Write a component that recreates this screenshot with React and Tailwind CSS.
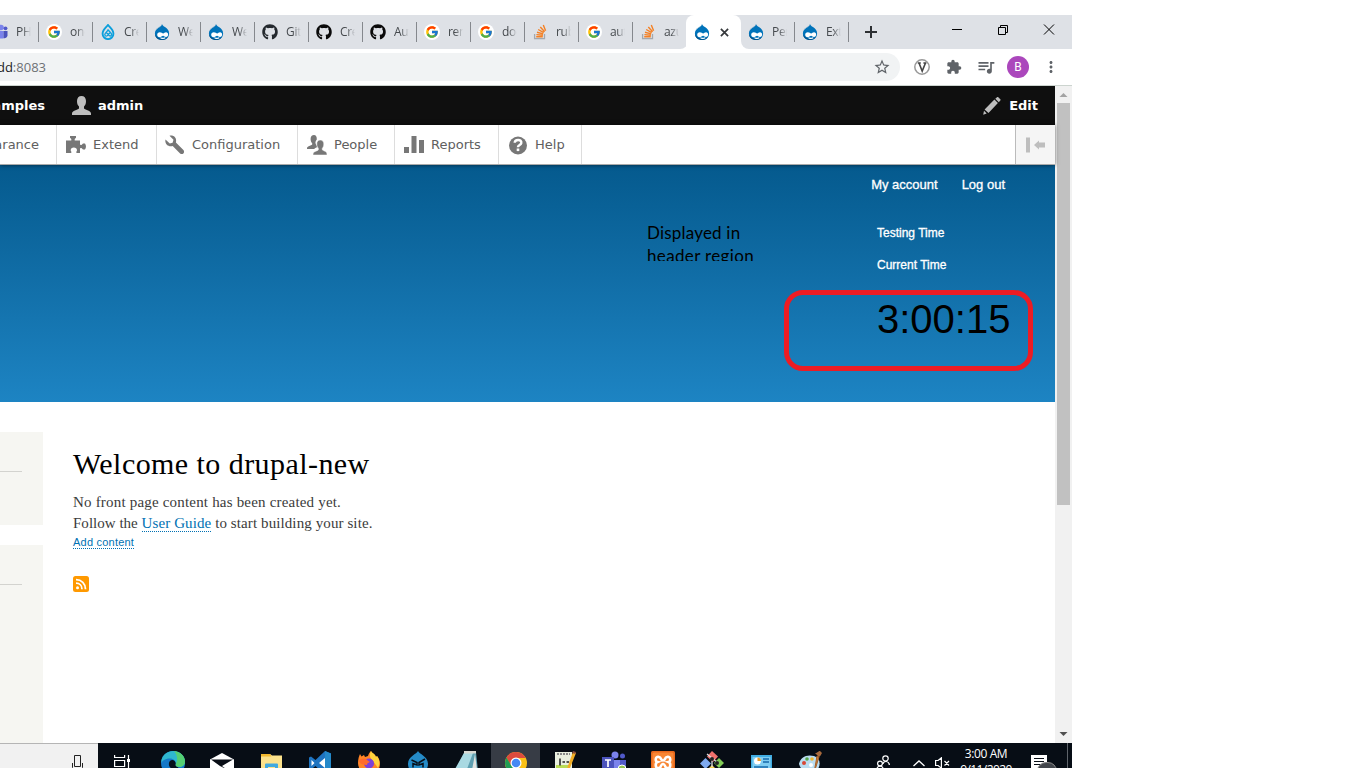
import React from "react";
import { FcGoogle } from "react-icons/fc";
import { FaGithub } from "react-icons/fa";
import { MdStarBorder, MdExtension, MdQueueMusic, MdMoreVert } from "react-icons/md";

function Druplicon() {
  return (
    <svg viewBox="0 0 16 16" className="h-4 w-4">
      <path d="M8 0c.5 1.600 1.600 2.200 3 3.100 2.400 1.500 4.100 3.500 4.100 6.300 0 3.800-3.200 6.600-7.100 6.600S.9 13.200.9 9.400c0-2.800 1.700-4.600 3.800-6C6.400 2.300 7.600 1.800 8 0z" fill="#0073ba" />
      <path d="M1.600 6.200C2.300 4.600 3.500 4 5 3.100 6.600 2.100 7.600 1.600 8 0c-.2 3-4 3.400-6.400 6.200z" fill="#9ab9cc" />
      <path d="M1 10.500c.4 3.300 3.400 5.500 7 5.500 2.800 0 5.100-1.300 6.300-3.300-1.600 1.300-3.400 2-6.100 2-3 0-5.400-1.400-7.200-4.200z" fill="#00538c" />
      <path d="M5.800 8.200c1.600 0 2.500 1.100 3.400 1.400.9-.3 1.500-1.300 2.800-1.300 1.400 0 2.100 1 2.100 2.200 0 1.400-.8 2.500-2.100 2.500-1.200 0-1.900-1.100-2.900-1.200-1.100.2-2 1.400-3.500 1.400s-2.400-1-2.400-2.500 1-2.500 2.600-2.500z" fill="#fff" />
      <path d="M6.500 13.700c1 1 3.600 1 4.700-.1" stroke="#fff" strokeWidth="1.200" fill="none" />
    </svg>
  );
}

function DrupalDrop() {
  return (
    <svg viewBox="0 0 16 16" className="h-4 w-4" fill="none" stroke="#0c9fdc">
      <path d="M8 1C6.500 3.200 2.600 5.500 2.600 9.700a5.400 5.400 0 0 0 10.800 0C13.400 5.500 9.500 3.200 8 1z" strokeWidth="1.900" />
      <path d="M8 5.200v1L5.300 9.300c-1.300 1.700.3 3.500 1.900 2.500L10.400 8.300M6.400 8.500l3 3.200c1.500 1 3-.9 1.700-2.500L8 5.800" strokeWidth="1.300" />
    </svg>
  );
}

function Google() {
  return (
    <span className="flex h-4 w-4 items-center justify-center rounded-full bg-white">
      <FcGoogle className="h-[14px] w-[14px]" />
    </span>
  );
}

function StackOverflow() {
  return (
    <svg viewBox="0 0 16 16" className="h-4 w-4" fill="none">
      <path d="M2.600 10v4.700h9.900V10" stroke="#a4a8ad" strokeWidth="1.300" />
      <path d="M4.200 12.800h6.600M4.400 10.600l6.500.7M5 8.200l6.200 1.700M6.200 5.500l5.500 3.100M8.300 3l4.300 4.700M11.300 1l2.300 5.800" stroke="#f48024" strokeWidth="1.400" />
    </svg>
  );
}

const GithubGray = () => <FaGithub className="h-4 w-4 text-[#24292e]" />;
const GithubBlack = () => <FaGithub className="h-4 w-4 text-[#0a0a0a]" />;

function Label({ children }) {
  return (
    <span className="ml-2 w-[15px] overflow-hidden whitespace-nowrap font-['Open_Sans',sans-serif] text-[12px] leading-4 tracking-[-0.3px] text-[#45494d] [mask-image:linear-gradient(to_right,#000_45%,transparent)]">
      {children}
    </span>
  );
}

function Tab({ icon: Icon, label, last }) {
  return (
    <div className="flex h-full w-[54px] shrink-0 items-center pl-[7px]">
      <span className="flex h-4 w-4 shrink-0">
        <Icon />
      </span>
      <Label>{label}</Label>
      <span className={last ? "hidden" : "ml-[7px] h-5 w-px shrink-0 bg-[#85888d]"} />
    </div>
  );
}

const tabs = [
  [Google, "one"],
  [DrupalDrop, "Crea"],
  [Druplicon, "Welc"],
  [Druplicon, "Welc"],
  [GithubGray, "GitH"],
  [GithubBlack, "Crea"],
  [GithubBlack, "Aut"],
  [Google, "rem"],
  [Google, "doc"],
  [StackOverflow, "ruby"],
  [Google, "auth"],
  [StackOverflow, "azur"],
];

function TabStrip() {
  return (
    <div className="flex h-[34px] bg-[#dee1e6]">
      <div className="flex w-[39px] shrink-0 items-center">
        <svg viewBox="0 0 8 16" className="h-4 w-2 shrink-0">
          <circle cx="1" cy="3.500" r="2.800" fill="#7b83eb" />
          <circle cx="5.500" cy="4.300" r="1.900" fill="#5059c9" />
          <path d="M0 7h3.500v7.500H0z" fill="#7b83eb" />
          <path d="M3.500 7H7.500v4.500a3 3 0 0 1-4 2.500z" fill="#4b53bc" />
        </svg>
        <Label>PHP</Label>
        <span className="ml-[7px] h-5 w-px shrink-0 bg-[#85888d]" />
      </div>
      {tabs.map(([icon, label], i) => (
        <Tab key={i} icon={icon} label={label} last={i === tabs.length - 1} />
      ))}
      <div className="-ml-[7px] flex h-full w-2 shrink-0 bg-white">
        <span className="h-full w-full rounded-br-lg bg-[#dee1e6]" />
      </div>
      <div className="flex shrink-0 bg-[#dee1e6]">
        <div className="-ml-[2px] flex h-full w-[55px] items-center rounded-t-lg bg-white pl-2">
          <Druplicon />
          <svg viewBox="0 0 10 10" className="ml-[10px] h-[9px] w-[9px]" stroke="#35383b" strokeWidth="1.900">
            <path d="M1 1l8 8M9 1L1 9" />
          </svg>
        </div>
      </div>
      <div className="flex h-full w-2 shrink-0 bg-white">
        <span className="h-full w-full rounded-bl-lg bg-[#dee1e6]" />
      </div>
      <div className="-ml-[8px] flex">
        <Tab icon={Druplicon} label="Perr" />
        <Tab icon={Druplicon} label="Exte" />
      </div>
      <svg viewBox="0 0 12 12" className="mt-[11px] ml-4 h-3 w-3" stroke="#2d3033" strokeWidth="2">
        <path d="M6 0v12M0 6h12" />
      </svg>
      <div className="ml-auto flex w-[120px] shrink-0 pt-[9px]">
        <svg viewBox="0 0 103 11" className="h-[11px] w-[103px]" fill="none" stroke="#000" strokeWidth="1">
          <path d="M0 5.500h10M46.500 3.500h7v7h-7zM48.500 3.500v-2h7v7h-2M92 .5l10 10M102 .5l-10 10" />
        </svg>
      </div>
    </div>
  );
}

function AddressBar() {
  return (
    <div className="flex h-[37px] items-center border-b border-[#ccd4cf] bg-white">
      <div className="flex h-7 w-[900px] items-center justify-between rounded-r-full bg-[#f1f3f4] pr-[9px]">
        <div className="flex w-[46px] justify-end overflow-hidden whitespace-nowrap font-['Open_Sans',sans-serif] text-[13px] leading-5 text-[#202124]">
          d8.dd<span className="text-[#6d7175]">:8083</span>
        </div>
        <MdStarBorder className="h-[18px] w-[18px] text-[#5f6368]" />
      </div>
      <svg viewBox="0 0 16 16" className="ml-[14px] h-4 w-4" fill="none">
        <circle cx="8" cy="8" r="7.200" stroke="#999" strokeWidth="1.500" />
        <path d="M3.800 4h3M9.400 4h3M5 4l3.200 8L11.500 4" stroke="#444" strokeWidth="1.600" />
      </svg>
      <MdExtension className="ml-4 h-4 w-4 text-[#5f6368]" />
      <MdQueueMusic className="ml-[14px] h-5 w-5 text-[#5f6368]" />
      <span className="ml-[11px] flex h-[22px] w-[22px] items-center justify-center rounded-full bg-[#ab47bc] font-['Roboto',sans-serif] text-[12px] text-white">B</span>
      <MdMoreVert className="ml-[13px] h-[18px] w-[18px] text-[#5f6368]" />
    </div>
  );
}

function AdminBar() {
  return (
    <div className="flex h-[39px] items-center bg-[#0f0f0f] font-['DejaVu_Sans',sans-serif] text-[13px] font-bold leading-4 text-white">
      <div className="flex w-[45px] justify-end overflow-hidden">Examples</div>
      <svg viewBox="0 0 19 19" className="ml-[27px] h-[19px] w-[19px]" fill="#bebebe">
        <path d="M9.500 0C6.800 0 5 1.900 5 5c0 2.800.8 4.400 2 5.600v1.900C5.500 14.200 0 14.500 0 17.500V19h19v-1.500c0-3-5.500-3.300-7-5v-1.900c1.200-1.200 2-2.800 2-5.600 0-3.100-1.800-5-4.500-5z" />
      </svg>
      <span className="ml-[7px]">admin</span>
      <div className="ml-auto flex items-center pr-[17px]">
        <svg viewBox="0 0 18 18" className="mr-2 h-[18px] w-[18px]" fill="#bebebe">
          <path d="M12.300 1.700 14 .3c.5-.4 1-.4 1.500.1l1.800 1.800c.4.500.4 1 0 1.400l-1.500 1.600zM11.400 2.600l3.500 3.500-9.400 9.800-3.900-3.500zM1 13.800l2.700 2.700-3.500 1.200z" />
        </svg>
        Edit
      </div>
    </div>
  );
}

const ExtendIcon = () => (
  <svg viewBox="0 0 20 20" className="h-5 w-5" fill="#777">
    <path d="M0 5.500h5.300V4.100L4 2.700V1h6v1.700L8.700 4.100v1.400H14v4.200l1.500.4L17 8.500h2c1.300 1.600 1.300 4.400 0 6h-2l-1.500-1.600-1.500.3V18h-3.600v-1.400c1.400-1.600.1-4-2.600-4-2.600 0-3.900 2.400-2.500 4V18H0z" />
  </svg>
);
const WrenchIcon = () => (
  <svg viewBox="0 0 20 20" className="-ml-px h-5 w-5" fill="#777">
    <path d="M4.500.8C9-.3 12 3.200 10.900 7.500l7.500 7.600c2 2.300-1 5.300-3.300 3.300L7.700 11C3.200 12.200-.5 8.900.5 4.600l4.300 4 2.800-.9.900-3z" />
  </svg>
);
const PeopleIcon = () => (
  <svg viewBox="0 0 20 20" className="h-5 w-5" fill="#777">
    <path d="M7 0C4.900 0 3.600 1.500 3.600 3.900c0 1.800.6 3.200 1.600 4.300v1.400C4 11 0 11 0 13.400V14h7.200c1-1 2.300-1.400 2.800-2l-.3-1.500C8 8.600 8 6.300 9.800 4.400 9.900 1.800 9 0 7 0z" />
    <path d="M13.200 5c-2.100 0-3.400 1.500-3.400 3.900 0 1.900.6 3.200 1.500 4.300v1.700c-1.200 1.300-5.300 1.300-5.300 4.100v1h14v-1c0-2.800-3.500-2.900-4.700-4.200v-1.600c1-1.100 1.500-2.400 1.500-4.300 0-2.400-1.400-3.900-3.600-3.900z" stroke="#fff" strokeWidth="0.500" />
  </svg>
);
const ReportsIcon = () => (
  <svg viewBox="0 0 20 20" className="h-5 w-5" fill="#777">
    <path d="M0 12h5v6H0zM7.500 1h5v17h-5zM15 5h5v13h-5z" />
  </svg>
);
const HelpIcon = () => (
  <svg viewBox="0 0 20 20" className="h-5 w-5">
    <circle cx="10" cy="10.500" r="9" fill="#777" />
    <path d="M6.700 7.800c.2-4 7.300-3.700 6.600.2-.3 2-3.400 2-3.400 4.300" stroke="#fff" strokeWidth="2.400" fill="none" />
    <path d="M8.700 13.500h2.600v2.600H8.700z" fill="#fff" />
  </svg>
);

function MenuItem({ icon: Icon, label, className }) {
  return (
    <div className={"flex h-full shrink-0 items-center border-r border-[#ddd] pl-[9px] " + className}>
      <Icon />
      <span className="ml-[7px]">{label}</span>
    </div>
  );
}

function AdminMenu() {
  return (
    <div className="relative flex h-[40px] items-center border-b border-[#aaa] bg-white font-['DejaVu_Sans',sans-serif] text-[13px] leading-4 text-[#606060] shadow-[0_0_4px_rgba(0,0,0,0.6)]">
      <div className="flex h-full w-[57px] items-center justify-end overflow-hidden border-r border-[#ddd] pr-[17px]">Appearance</div>
      <MenuItem icon={ExtendIcon} label="Extend" className="w-[100px]" />
      <MenuItem icon={WrenchIcon} label="Configuration" className="w-[141px]" />
      <MenuItem icon={PeopleIcon} label="People" className="w-[97px]" />
      <MenuItem icon={ReportsIcon} label="Reports" className="w-[104px]" />
      <MenuItem icon={HelpIcon} label="Help" className="w-[83px]" />
      <div className="ml-auto flex h-full w-[40px] items-center border-l border-[#bbb] bg-[#f5f5f5] pl-[10px]">
        <svg viewBox="0 0 20 16" className="h-4 w-5" fill="#bebebe">
          <path d="M0 .5h4v15H0zM8 8l5-4.500v2H19v5h-6v2z" />
        </svg>
      </div>
    </div>
  );
}

function SiteHeader() {
  return (
    <header className="h-[237px] bg-linear-to-b from-[#055a8e] to-[#1d84c3] font-['Liberation_Sans',Arial,sans-serif]">
      <nav className="flex justify-end gap-6 pt-[12px] pr-[50px] text-[13px] leading-4 text-white [-webkit-text-stroke:0.3px_white]">
        <a>My account</a>
        <a>Log out</a>
      </nav>
      <div className="flex pt-7 pl-[647px]">
        <p className="h-[40px] w-[230px] overflow-hidden font-['Lato',sans-serif] text-[17px] leading-[23px] tracking-[0.35px] text-black">
          <span className="tracking-[0.2px]">Displayed in</span>
          <br />
          header region
        </p>
        <div className="pt-[4px] text-[12px] leading-4 text-white [-webkit-text-stroke:0.3px_white]">
          <p>Testing Time</p>
          <p className="mt-4">Current Time</p>
          <p className="mt-[23px] text-[40px] leading-[46px] text-black [-webkit-text-stroke:0]">3:00:15</p>
        </div>
      </div>
    </header>
  );
}

function Content() {
  return (
    <main className="flex h-[341px] bg-white pt-[30px]">
      <aside className="flex w-[43px] shrink-0 flex-col gap-5">
        <div className="h-[93px] bg-[#f6f6f2] pt-[39px]">
          <div className="h-px w-[22px] bg-[#d3d3cf]" />
        </div>
        <div className="flex-1 bg-[#f6f6f2] pt-[39px]">
          <div className="h-px w-[22px] bg-[#d3d3cf]" />
        </div>
      </aside>
      <section className="pl-[30px] font-['Liberation_Serif',Georgia,serif] text-[15px] leading-[21px] tracking-[0.19px] text-[#3b3b3b]">
        <h1 className="mt-[14px] text-[30px] leading-9 tracking-[0.44px] text-black">Welcome to drupal-new</h1>
        <p className="mt-[10px]">No front page content has been created yet.</p>
        <p className="tracking-[0.1px]">
          <span className="tracking-[0.02px]">Follow the </span>
          <a className="border-b border-dotted border-[#0071b3] text-[#0071b3]">User Guide</a> to start building your site.
        </p>
        <p className="h-4 font-['Liberation_Sans',Arial,sans-serif] text-[11px] leading-4 tracking-[0.22px]">
          <a className="border-b border-dotted border-[#0071b3] text-[#0071b3]">Add content</a>
        </p>
        <svg viewBox="0 0 16 16" className="mt-[26px] h-4 w-4" fill="none">
          <rect width="16" height="16" rx="2.500" fill="#ff9900" />
          <circle cx="4.500" cy="11.700" r="1.500" fill="#fff" />
          <path d="M3 7.200c3.600 0 6 2.500 6 6M3 3.700c5.500 0 9.500 4 9.500 9.500" stroke="#fff" strokeWidth="1.800" />
        </svg>
      </section>
    </main>
  );
}

function ScrollBar() {
  return (
    <div className="flex w-[17px] shrink-0 flex-col items-center bg-[#f1f1f1]">
      <svg viewBox="0 0 17 17" className="h-[17px] w-[17px]">
        <path d="M4.500 11h8l-4-4z" fill="#a3a3a3" />
      </svg>
      <div className="h-[402px] w-[13px] bg-[#c1c1c1]" />
      <svg viewBox="0 0 17 17" className="mt-auto h-[17px] w-[17px]">
        <path d="M4.500 6h8l-4 4z" fill="#505050" />
      </svg>
    </div>
  );
}

const EdgeIcon = () => (
  <svg viewBox="0 0 24 24" className="h-6 w-6">
    <circle cx="12" cy="12" r="12" fill="#1478c8" />
    <path d="M.5 9C2 3.500 6.500 0 12 0c7 0 12 5 12 10.500 0 3.500-2.500 5.500-6 5.500-2.500 0-4-1-3.500-2.500C15.500 11 13 7.500 9 7.500 5 7.500 1.500 9 .5 12z" fill="#2fb7cf" />
    <path d="M13 .1C19.500.6 24 5.500 24 10.500c0 3.500-2.500 5.500-6 5.500-2.500 0-4-1-3.500-2.500C17.500 9 16 3.500 13 .1z" fill="#55cf72" />
    <path d="M9 10c2.500-2.500 6.500 0 5.500 3.500-.4 1.500 1 2.500 3 2.700-2 3-8 2.300-9.300-1.200C7.500 13 8 11 9 10z" fill="#07101a" />
  </svg>
);
const MailIcon = () => (
  <svg viewBox="0 0 24 24" className="h-6 w-6">
    <path d="M0 8.500 12 2l12 6.500V22H0z" fill="#fff" />
    <path d="M1 8.500h22L12 15l4 3-6-3z" fill="#080d15" />
  </svg>
);
const FolderIcon = () => (
  <svg viewBox="0 0 24 24" className="h-6 w-6">
    <path d="M2 3h9l2 1.500h10v18H2z" fill="#fce28c" />
    <path d="M2 3h9l1.500 2.500H2z" fill="#f2b82e" />
    <path d="M6 23V13.500q0-1 1-1h11q1 0 1 1V23h-3v-7H9v7z" fill="#41a9df" />
  </svg>
);
const CodeIcon = () => (
  <svg viewBox="0 0 24 24" className="h-6 w-6">
    <path d="m17 0 6 2.500v19L17 24 7.500 15 3 18.500 1 17.500v-11L3 5.500 7.500 9z" fill="#1f74c1" />
    <path d="M17 7v10l-6-5zM3.500 9v6l3-3z" fill="#fff" />
    <path d="m17 0 6 2.500v19L17 24z" fill="#2489ca" />
  </svg>
);
const FirefoxIcon = () => (
  <svg viewBox="0 0 24 24" className="h-6 w-6">
    <path d="M1 12C1 8 2 5 3 3l1.500 2.500L7 4l1 2 3-1c1-3 2-4 3-5 1 2 2 2 4 4l1 2 1-1c2 2 3 5 3 8 0 6-5 11-11 11S1 18 1 12z" fill="#ff8426" />
    <path d="M14 0c1 2 2 2 4 4l1 2 1-1c3 4 3 8 1 12l-5-7c-3-2-4-6-2-10z" fill="#ffd33d" />
    <circle cx="12" cy="12.500" r="5" fill="#7b42d8" />
    <path d="M2 10c2-3 6-3 8-1l3 2c-2 1-3 1-3 3-4 0-7-1-8-4z" fill="#ff6b2c" />
  </svg>
);
const DropIcon = () => (
  <svg viewBox="0 0 24 24" className="h-6 w-6">
    <path d="M12 0c1 3 10 5 10 13a10 10 0 0 1-20 0C2 5 11 3 12 0z" fill="#258bc7" />
    <path d="M5.500 9 11 11.500V14l-4-1.500v4M19 8l-6 3.500V14l4-1.500v4" stroke="#07101a" strokeWidth="1.500" fill="none" />
  </svg>
);
const NotepadIcon = () => (
  <svg viewBox="0 0 24 24" className="h-6 w-6">
    <path d="m9 2 12-1 2 19H0z" fill="#5f9fb0" />
    <path d="m9 2 9 0-6 16H0z" fill="#a9d9e2" />
    <path d="M9 0h12v2.500H9z" fill="#d8d8d2" />
    <path d="M20 3l2 16h-5z" fill="#e1e3df" />
  </svg>
);
const ChromeIcon = () => (
  <svg viewBox="0 0 24 24" className="h-6 w-6">
    <circle cx="12" cy="12" r="11" fill="#fbc116" />
    <path d="M12 12 7 14.500 2.400 6.600A11 11 0 0 1 21.700 7H12z" fill="#dc4b3e" />
    <path d="M2.500 6.500 7.500 15l4.500 2-2 5.800A11 11 0 0 1 2.500 6.500z" fill="#219c55" />
    <circle cx="12" cy="12" r="5.500" fill="#fff" />
    <circle cx="12" cy="12" r="4.300" fill="#4588f3" />
  </svg>
);
const NotepadPlusIcon = () => (
  <svg viewBox="0 0 24 24" className="h-6 w-6">
    <path d="M2 1h17v22H2z" fill="#e9efdf" />
    <path d="M3 14h14v8H3z" fill="#b9dc55" />
    <path d="M4 3h13" stroke="#888" strokeWidth="2" strokeDasharray="2 1" />
    <path d="M7 7.500v7M9.500 11h2.500M13.500 11H16" stroke="#222" strokeWidth="1.500" />
    <path d="m20 1 3 1-6 15-3 3 .5-4z" fill="#f2ad24" />
    <path d="m20 0 3 1-.7 2-3-1z" fill="#8c4b3a" />
  </svg>
);
const TeamsIcon = () => (
  <svg viewBox="0 0 24 24" className="h-6 w-6">
    <circle cx="13" cy="4" r="3.500" fill="#7b83eb" />
    <circle cx="20.500" cy="5" r="2.500" fill="#5059c9" />
    <path d="M9 9h9v13H9z" fill="#7b83eb" />
    <path d="M18 9h6v9h-6z" fill="#5059c9" />
    <path d="M0 6h12v13H0z" fill="#4b53bc" />
    <path d="M3 9h6M6 9v7" stroke="#fff" strokeWidth="1.700" />
    <circle cx="20" cy="18" r="4" fill="#92c353" stroke="#fff" />
  </svg>
);
const XamppIcon = () => (
  <svg viewBox="0 0 24 24" className="h-6 w-6">
    <rect width="24" height="24" rx="1.500" fill="#e8681c" />
    <rect x="1.500" y="1.500" width="21" height="21" rx="1.500" fill="#f88634" />
    <path d="M8 6C4 5 4 10.500 6.500 11c-2.500 1-2.500 7 1.500 6 2.500-.5 1.500-4 4-4s1.500 3.500 4 4c4 1 4-5 1.500-6C20 10.500 20 5 16 6c-2.500.5-1.500 3.500-4 3.500S10.500 6.500 8 6z" fill="none" stroke="#fff" strokeWidth="2.600" />
  </svg>
);
const GitIcon = () => (
  <svg viewBox="0 0 24 24" className="h-6 w-6">
    <path d="m12 0 6 5.500-5 5.500-6-5.500z" fill="#f0716d" />
    <path d="m5.500 7 5.500 5.500-5.500 5.500L0 12.500z" fill="#7eaaf0" />
    <path d="m19 7 5 5-5 5-5-5z" fill="#82cc56" />
    <path d="m12 14 5 5-5 5-5-5z" fill="#f5d14c" />
    <path d="m7 3 11 9M12 7v9" stroke="#ddd" strokeWidth="1.300" />
    <circle cx="12" cy="8" r="2" fill="#222" />
    <circle cx="17" cy="12" r="2" fill="#222" />
  </svg>
);
const ControlIcon = () => (
  <svg viewBox="0 0 24 24" className="h-6 w-6">
    <path d="M2 4h21v17H2z" fill="#41ade2" />
    <path d="M3.500 6h18v13h-18z" fill="#7fcdf2" />
    <circle cx="8.500" cy="10" r="3.500" fill="#fff" />
    <path d="M8.500 10V6.500A3.500 3.500 0 0 1 12 10z" fill="#e89b29" />
    <path d="M14 8h6M14 11h6M5 16h14" stroke="#1769aa" strokeWidth="1.500" />
  </svg>
);
const PaintIcon = () => (
  <svg viewBox="0 0 24 24" className="h-6 w-6">
    <path d="M1 13C2 6 9 3 16 5c6 2 7 8 4 13-4 5-15 7-19-5z" fill="#b9dcf0" />
    <circle cx="6" cy="12" r="2" fill="#d84735" />
    <circle cx="9" cy="8" r="1.800" fill="#55a64a" />
    <circle cx="14" cy="8" r="1.800" fill="#f0b72c" />
    <circle cx="13" cy="14" r="2" fill="#fff" />
    <path d="m19 5 2 1-5 16z" fill="#d17d38" stroke="#a56127" />
    <path d="M17 2c3 0 3-2 5-2l2 2c-1 1-1 3-3 4z" fill="#a7693c" />
  </svg>
);

const apps = [EdgeIcon, MailIcon, FolderIcon, CodeIcon, FirefoxIcon, DropIcon, NotepadIcon, ChromeIcon, NotepadPlusIcon, TeamsIcon, XamppIcon, GitIcon, ControlIcon, PaintIcon];

function Taskbar() {
  return (
    <div className="h-[25px] overflow-hidden bg-[#070d15]">
      <div className="flex h-10">
        <div className="flex w-[98px] shrink-0 justify-end border-t border-[#b5b5b5] bg-[#f1f1f1] pr-[15px] pt-[11px]">
          <svg viewBox="0 0 11 18" className="h-[18px] w-[11px]" fill="none" stroke="#222">
            <path d="M2.500.5h6v11h-6zM.5 8v4.500q0 2 2 2h6q2 0 2-2V8M5.500 14.500V18" />
          </svg>
        </div>
        <div className="flex w-[50px] shrink-0 pt-[12px] pl-[16px]">
          <svg viewBox="0 0 17 17" className="h-[17px] w-[17px]" fill="none" stroke="#fff" strokeWidth="1.200">
            <path d="M.6 0v2.500h10V0M.6 5.500h10v6H.6zM.6 17v-2.500h10V17M14.500 0v17" />
            <path d="M13 4h3v3h-3z" fill="#fff" stroke="none" />
          </svg>
        </div>
        {apps.map((Icon, i) => (
          <div key={i} className={"flex w-[49px] shrink-0 justify-center pt-2 " + (i === 7 ? "bg-[#373c45]" : "")}>
            <Icon />
          </div>
        ))}
        <div className="ml-auto flex shrink-0 text-white">
          <svg viewBox="0 0 14 16" className="mt-[12px] h-4 w-[14px]" fill="none" stroke="#fff" strokeWidth="1.200">
            <circle cx="9.500" cy="3.500" r="2.700" />
            <circle cx="4" cy="8.500" r="2.400" />
            <path d="M7 9c.5-3.500 6-3.500 6.400 1M.6 15c.4-5 6.500-5 7 0" />
          </svg>
          <svg viewBox="0 0 12 7" className="mt-[17px] ml-[23px] h-[7px] w-3" fill="none" stroke="#fff" strokeWidth="1.300">
            <path d="m.5 6 5.500-5 5.500 5" />
          </svg>
          <svg viewBox="0 0 15 12" className="mt-[14px] ml-[10px] h-3 w-[15px]" fill="none" stroke="#fff" strokeWidth="1.200">
            <path d="M.6 3.500h2.500L6.400.8v10.400L3.100 8.500H.6zM9.500 4l4.500 4.500M14 4 9.500 8.500" />
          </svg>
          <div className="ml-[6px] w-[60px] pt-[3px] text-center font-['Open_Sans',sans-serif] text-[12px] leading-4 tracking-[-0.4px]">
            3:00 AM
            <br />
            <span className="tracking-[-0.6px]">9/11/2020</span>
          </div>
          <div className="relative ml-[15px] mt-[12px] h-[26px] w-[36px]">
            <svg viewBox="0 0 16 16" className="h-4 w-4">
              <path d="M0 0h16v13H9l-3 3v-3H0z" fill="#fff" />
              <path d="M3 3.500h10M3 6.500h10M3 9.500h7" stroke="#070d15" strokeWidth="1.200" />
            </svg>
            <span className="absolute left-[6px] top-[7px] flex h-[18px] w-[20px] items-center justify-center rounded-full border border-[#888] bg-[#42464c] font-['Open_Sans',sans-serif] text-[11px] font-semibold leading-none">20</span>
          </div>
          <span className="mr-1 h-full w-px bg-[#5f646b]" />
        </div>
      </div>
    </div>
  );
}

export default function App() {
  return (
    <div className="h-screen overflow-hidden bg-white pt-[15px]">
      <div className="relative w-[1072px] overflow-hidden">
        <TabStrip />
        <AddressBar />
        <div className="flex">
          <div className="min-w-0 flex-1">
            <AdminBar />
            <AdminMenu />
            <SiteHeader />
            <Content />
          </div>
          <ScrollBar />
        </div>
        <Taskbar />
        <div className="absolute left-[784px] top-[275px] h-[81px] w-[249px] rounded-[19px] border-[5px] border-[#ed1c24]" />
      </div>
    </div>
  );
}
